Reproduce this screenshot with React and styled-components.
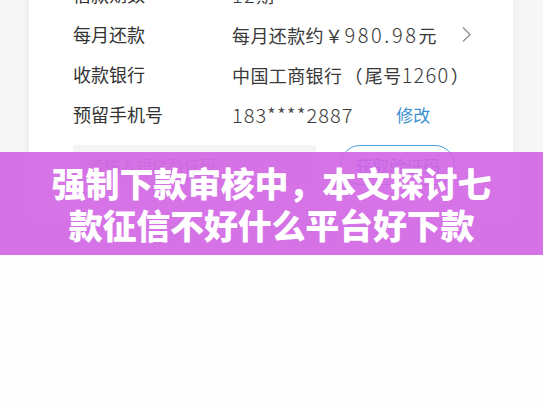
import React from "react";
import styled, { createGlobalStyle } from "styled-components";

const Global = createGlobalStyle`
  html, body { margin: 0; padding: 0; background: #fefefe; }
  body { font-family: "Noto Sans CJK SC", "Noto Sans", sans-serif; }
`;

const Page = styled.div`
  width: 543px;
  height: 408px;
  display: flex;
  flex-direction: column;
  background: #fefefe;
  overflow: hidden;
`;

const Hero = styled.div`
  position: relative;
  height: 255px;
  flex: none;
  overflow: hidden;
  background: #f6f6f6;
`;

const Screen = styled.div`
  padding: 0 30px 0 29px;
  display: flex;
  flex-direction: column;
`;

const Card = styled.div`
  margin-top: -26px;
  background: #ffffff;
  border-radius: 0 0 8px 8px;
  box-shadow: 0 0 10px rgba(0, 0, 0, 0.06);
  padding: 0 0 35px 44px;
  display: flex;
  flex-direction: column;
  height: 246px;
  box-sizing: border-box;
`;

const Row = styled.div`
  height: 40px;
  display: flex;
  align-items: center;
  color: #333;
  font-size: 18px;
`;

const Label = styled.span`
  width: 159px;
  flex: none;
  color: #333;
`;

const Value = styled.span`
  color: #3a3a3a;
  letter-spacing: 0.4px;
  white-space: nowrap;
`;

const Num = styled.span`
  font-size: 20px;
  font-weight: 300;
  letter-spacing: ${(p) => p.$ls ?? 1.3}px;
  color: #3a3a3a;
`;

const Paren = styled.span`
  margin: 0 ${(p) => p.$m || 0}px;
`;

const Link = styled.span`
  color: #3a8fcf;
  margin-left: ${(p) => p.$gap || 0}px;
  font-size: 17px;
`;

const Chevron = styled.svg`
  margin-left: 24px;
  flex: none;
`;

const CodeRow = styled.div`
  margin-top: 11px;
  display: flex;
  align-items: center;
  height: 40px;
`;

const CodeInput = styled.div`
  width: 228px;
  height: 40px;
  background: #f4f4f4;
  border-radius: 3px;
  display: flex;
  align-items: center;
  padding-left: 15px;
  color: #9a9a9a;
  font-size: 16px;
`;

const CodeButton = styled.div`
  margin-left: 24px;
  width: 115px;
  height: 40px;
  box-sizing: border-box;
  border: 1.5px solid #4c9fd6;
  border-radius: 20px;
  display: flex;
  align-items: center;
  justify-content: center;
  color: #3a8fcf;
  font-size: 17px;
`;

const Banner = styled.div`
  position: absolute;
  left: 0;
  right: 0;
  top: 152px;
  height: 103px;
  background: rgba(210, 100, 228, 0.9);
  display: flex;
  align-items: center;
  justify-content: center;
`;

const Title = styled.h1`
  margin: 0;
  color: #ffffff;
  font-family: "Noto Sans CJK SC", sans-serif;
  font-weight: 900;
  font-size: 34px;
  line-height: 42px;
  text-align: center;
  width: 450px;
  letter-spacing: -0.2px;
`;

const Blank = styled.div`
  flex: 1;
  background: #fefefe;
`;

export default function App() {
  return (
    <Page>
      <Global />
      <Hero>
        <Screen>
          <Card>
            <Row>
              <Label>借款期数</Label>
              <Value><Num>12</Num>期</Value>
            </Row>
            <Row>
              <Label>每月还款</Label>
              <Value>每月还款约<Paren $m={1}>￥</Paren><Num $ls={2.6}>980.98</Num>元</Value>
              <Chevron width="11" height="17" viewBox="0 0 11 17">
                <path d="M2 1.5 L9 8.5 L2 15.5" fill="none" stroke="#9a9a9a" strokeWidth="1.6" />
              </Chevron>
            </Row>
            <Row>
              <Label>收款银行</Label>
              <Value>中国工商银行<Paren $m={2}>（</Paren>尾号<Num>1260</Num><Paren $m={1}>）</Paren></Value>
            </Row>
            <Row>
              <Label>预留手机号</Label>
              <Value><Num $ls={1}>183****2887</Num></Value>
              <Link $gap={43}>修改</Link>
            </Row>
            <CodeRow>
              <CodeInput>请输入短信验证码</CodeInput>
              <CodeButton>获取验证码</CodeButton>
            </CodeRow>
          </Card>
        </Screen>
        <Banner>
          <Title>强制下款审核中，本文探讨七款征信不好什么平台好下款</Title>
        </Banner>
      </Hero>
      <Blank />
    </Page>
  );
}
